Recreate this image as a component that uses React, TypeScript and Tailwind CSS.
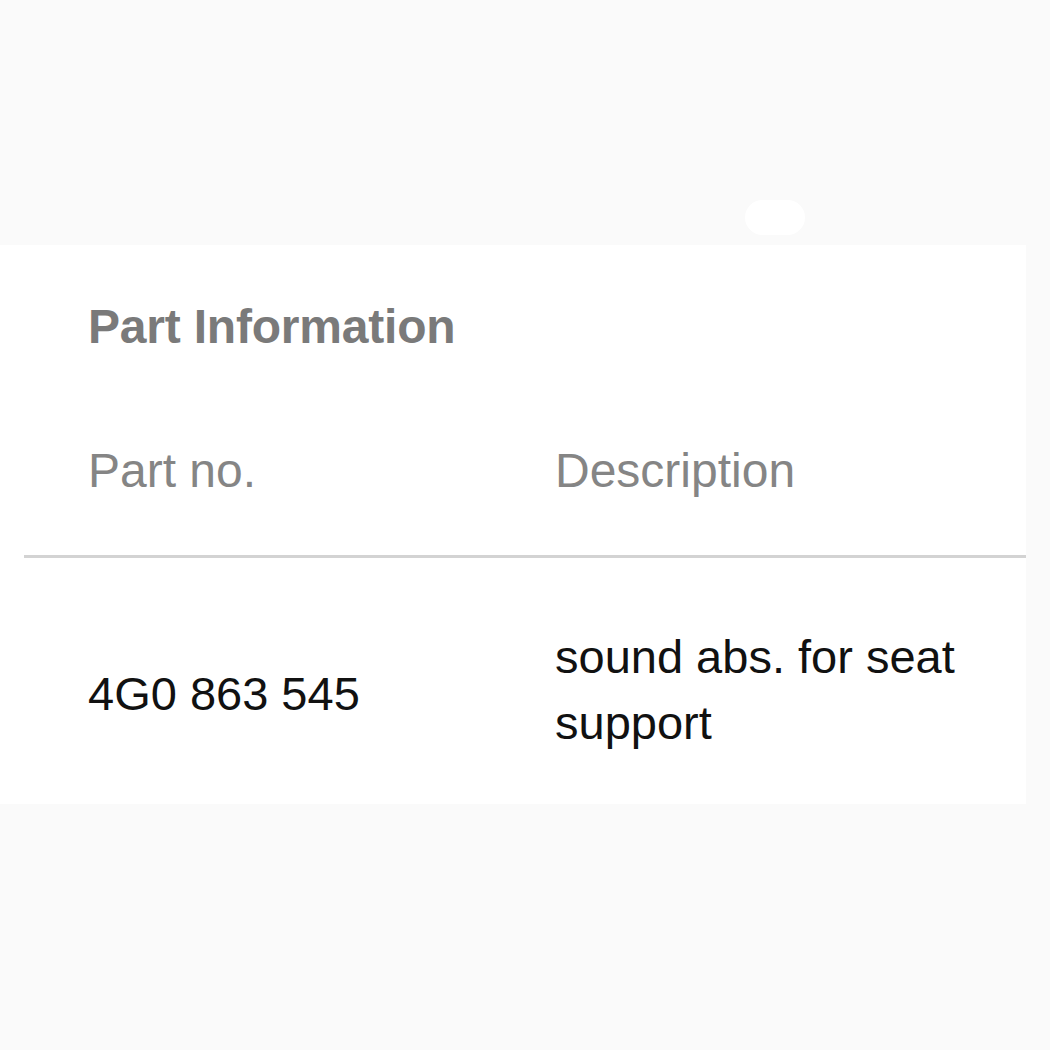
export default function App() {
  return (
    <div className="w-[1050px] h-[1050px] overflow-hidden bg-[#fafafa] pt-[200px] font-['Liberation_Sans',Arial,sans-serif]">
      {/* faint pill above the card */}
      <div className="ml-[745px] w-[60px] h-[35px] rounded-full bg-white" />

      {/* Card */}
      <div className="mt-[10px] w-[1026px] bg-white pb-[48px]">
        <div className="ml-6">
          <h2 className="pl-16 pt-[58px] text-[48px] leading-[48px] font-bold text-[#7a7a7a] tracking-[-0.2px]">
            Part Information
          </h2>

          <div className="mt-[96px] flex border-b-[3px] border-[#d3d3d3] pb-[60px] text-[48px] leading-[48px] text-[#858585]">
            <div className="w-[467px] px-16">Part no.</div>
            <div className="flex-1 pl-16">Description</div>
          </div>

          <div className="flex items-center pt-[66px] text-[47px] text-[#111111]">
            <div className="w-[467px] px-16 pt-2 leading-[48px]">4G0 863 545</div>
            <div className="flex-1 pl-16 pr-6 leading-[66px]">sound abs. for seat support</div>
          </div>
        </div>
      </div>
    </div>
  )
}
